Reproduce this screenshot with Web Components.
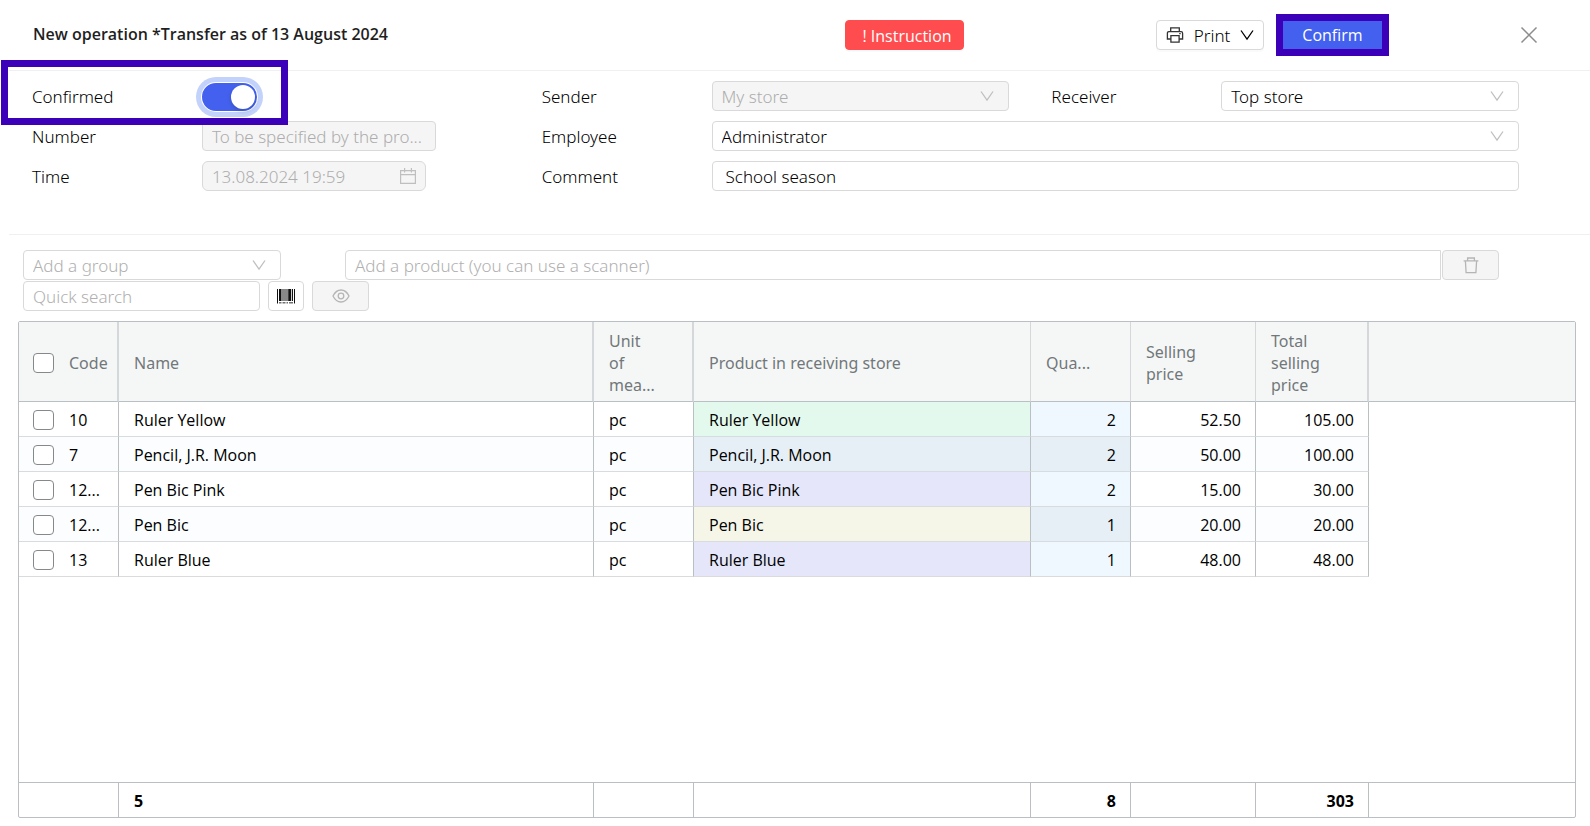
<!DOCTYPE html>
<html lang="en">
<head>
<meta charset="utf-8">
<title>New operation</title>
<style>
  html, body { margin: 0; background: #fff; }
  body { font: 300 17px/22px "Noto Sans", "Open Sans", sans-serif; color: #000; }
</style>
</head>
<body>
<op-page></op-page>
<script>
const CONTROL = `
  * { box-sizing: border-box; }
  input, select, button { font: inherit; color: inherit; margin: 0; }
  .box { position: relative; display: flex; min-width: 0; height: 30px; }
  .box input, .box select {
    flex: 1; min-width: 0; height: 30px; padding: 0 9px; background: #fff;
    border: 1px solid #d9d9d9; border-radius: 4px; appearance: none; outline: none;
    opacity: 1; text-overflow: ellipsis;
  }
  .box select { padding-top: 2px; }
  .box input::placeholder { color: #b0b0b0; opacity: 1; }
  .box :disabled { background: #f5f5f5; color: #adadad; }
  .box svg { position: absolute; right: 15px; top: 8px; pointer-events: none; color: #bfbfbf; }
`;
const ICONS = {
  down: '<svg width="14" height="14" viewBox="0 0 14 14" fill="none" stroke="currentColor" stroke-width="1.3"><path d="M1 2.500 7 11 13 2.500"/></svg>',
  calendar: '<svg width="16" height="16" viewBox="0 0 16 16" fill="none" stroke="currentColor" stroke-width="1.2"><path d="M.6 2.6h14.8v12.8H.6zM.6 6.6h14.8M4.6 0v4.4M11.4 0v4.4"/></svg>',
  print: '<svg width="18" height="18" viewBox="0 0 18 18" fill="none" stroke="#333" stroke-width="1.3"><path d="M4.7 5.6V1.8h8.6v3.8M4.7 13H1.4V7.2q0-1.5 1.5-1.5h12.2q1.5 0 1.5 1.5V13h-3.3M4.900 9.600h8.200v6.600H4.900zM13.200 7.700h1.500"/></svg>',
  close: '<svg width="18" height="18" viewBox="0 0 18 18" fill="none" stroke="currentColor" stroke-width="1.5"><path d="m1.5 1.5 15 15m0-15-15 15"/></svg>',
  trash: '<svg width="16" height="17" viewBox="0 0 16 17" fill="none" stroke="currentColor" stroke-width="1.3"><path d="M.6 3.9h14.8M2.4 4l.7 11.700h9.800L13.600 4M4.600 3.800V1h6.800v2.800"/></svg>',
  eye: '<svg width="18" height="14" viewBox="0 0 18 14" fill="none" stroke="currentColor" stroke-width="1.3"><path d="M1 7q3-6 8-6t8 6q-3 6-8 6T1 7z"/><circle cx="9" cy="7" r="2.8"/></svg>',
  barcode: '<svg width="18" height="15" viewBox="0 0 18 15" fill="currentColor"><path d="M0 0h1v14.500H0zM2 0h2.500v12H2zM5.500 0h1v12h-1zM7.500 0h1v12h-1zM9.500 0h1v12h-1zM11.200 0h3v12h-3zM15 0h1v12h-1zM17 0h1v14.500h-1z"/><path opacity=".6" d="M2 13h2.500v1.500H2zM5.500 13h3v1.500h-3zM9.500 13h1.500v1.500H9.500zM12 13h4v1.500h-4z"/></svg>'
};

class Base extends HTMLElement {
  connectedCallback() {
    if (this.shadowRoot) return;
    this.attachShadow({ mode: "open" }).innerHTML = this.view();
  }
}

customElements.define("op-page", class extends Base {
  view() { return `
    <style>
      :host { display: flex; flex-direction: column; min-height: 100vh; box-sizing: border-box; padding-bottom: 8px; }
      hr { border: 0; border-top: 1px solid #f0f0f0; margin: 0 0 0 9px; }
      op-grid { flex: 1; margin: 10px 14px 0 18px; }
    </style>
    <op-header>New operation *Transfer as of 13 August 2024</op-header>
    <hr>
    <op-form></op-form>
    <hr>
    <op-toolbar></op-toolbar>
    <op-grid></op-grid>`; }
});

customElements.define("op-header", class extends Base {
  view() { return `
    <style>
      * { box-sizing: border-box; }
      :host { display: flex; align-items: center; height: 70px; box-sizing: border-box; padding: 0 52px 0 33px; }
      h1 { flex: 1; margin: 0; padding-bottom: 2px; font: 600 16px/22px "Open Sans", "Noto Sans", sans-serif; color: #1f1f1f; }
      button { display: flex; align-items: center; justify-content: center; height: 30px; font: inherit; color: #000;
        background: #fff; border: 1px solid #d9d9d9; border-radius: 4px; margin: 0; padding: 0; box-shadow: 0 2px 0 #00000005; white-space: pre; }
      .help { width: 119px; background: #ff4d4f; border-color: #ff4d4f; color: #fff; margin-right: 192px; padding: 2px 0 0 5px; font-weight: 400; font-family: "Open Sans", sans-serif; font-size: 16px; }
      .print { width: 108px; gap: 10px; margin-right: 12px; }
      .print span { padding-top: 2px; }
      .confirm { width: 113px; height: 42px; border: 7px solid #3c00b8; border-radius: 0; background: #4361ee; color: #fff; margin-right: 131px; box-shadow: none; font-weight: 400; font-family: "Open Sans", sans-serif; font-size: 16px; }
      .close { width: 18px; border: 0; color: #8c8c8c; box-shadow: none; }
    </style>
    <h1><slot></slot></h1>
    <button class="help">! Instruction</button>
    <button class="print">${ICONS.print}<span>Print</span>${ICONS.down}</button>
    <button class="confirm">Confirm</button>
    <button class="close" aria-label="Close">${ICONS.close}</button>`; }
});

customElements.define("op-field", class extends Base {
  view() {
    const kind = this.getAttribute("kind"), value = this.getAttribute("value") || "";
    const off = this.hasAttribute("disabled") ? "disabled" : "";
    const control = {
      switch: `<input id="c" type="checkbox" role="switch" class="switch" checked>`,
      select: `<div class="box"><select id="c" ${off}><option>${value}</option></select>${ICONS.down}</div>`,
      text: `<div class="box"><input id="c" value="${value}" ${off}></div>`,
      time: `<div class="box time"><input id="c" value="${value}" ${off}>${ICONS.calendar}</div>`
    }[kind];
    return `
    <style>
      ${CONTROL}
      :host { display: grid; grid-template-columns: subgrid; align-items: center; position: relative; }
      label { padding-top: 2px; }
      .box { grid-column: 2 / -1; margin-right: 42px; }
      :host([narrow]) .box { width: 234px; }
      :host([narrow]) .time { width: 224px; }
      .time input { border-radius: 6px; }
      .time svg { top: 7px; right: 10px; }
      :host([indent]) input { padding-left: 13px; }
      .switch { appearance: none; margin: 2px 0 0; width: 55px; height: 28px; border-radius: 14px; background: #4361ee;
        border: 2px solid #4361ee; box-shadow: 0 0 0 1px #fff, 0 0 0 6px #c3d2fb; display: flex; justify-content: flex-end; }
      .switch::before { content: ""; width: 24px; height: 24px; border-radius: 50%; background: #fff; box-shadow: 0 2px 4px #00230b33; }
      :host([marked])::after { content: ""; position: absolute; left: -31px; top: -21px; bottom: -14px; width: 287px;
        box-sizing: border-box; border: 7px solid #3c00b8; pointer-events: none; z-index: 1; }
    </style>
    <label for="c">${this.getAttribute("label")}</label>${control}`;
  }
});

customElements.define("op-form", class extends Base {
  view() { return `
    <style>
      :host { display: grid; grid-template-columns: repeat(9, 1fr); grid-auto-rows: 30px; row-gap: 10px;
        padding: 10px 29px 43px 32px; }
      .s { grid-column: span 3; }
      .l { grid-column: span 6; }
    </style>
    <op-field class="s" label="Confirmed" kind="switch" marked></op-field>
    <op-field class="s" label="Sender" kind="select" value="My store" disabled></op-field>
    <op-field class="s" label="Receiver" kind="select" value="Top store"></op-field>
    <op-field class="s" label="Number" kind="text" value="To be specified by the pro..." disabled narrow></op-field>
    <op-field class="l" label="Employee" kind="select" value="Administrator"></op-field>
    <op-field class="s" label="Time" kind="time" value="13.08.2024 19:59" disabled narrow></op-field>
    <op-field class="l" label="Comment" kind="text" value="School season" indent></op-field>`; }
});

customElements.define("op-toolbar", class extends Base {
  view() { return `
    <style>
      ${CONTROL}
      :host { display: flex; flex-direction: column; gap: 1px; padding: 15px 91px 0 23px; }
      .row { display: flex; gap: 8px; }
      .group { width: 258px; margin-right: 56px; }
      .group select { color: #b0b0b0; }
      .product { flex: 1; margin-right: -7px; }
      .product input { border-radius: 4px 0 0 4px; }
      .search { width: 237px; }
      button { display: flex; align-items: center; justify-content: center; width: 57px; height: 30px; padding: 0;
        border: 1px solid #d9d9d9; border-radius: 4px; background: #f5f5f5; color: #b5b5b5; }
      .bar { width: 36px; background: #fff; color: #111; }
    </style>
    <div class="row">
      <div class="box group"><select aria-label="Add a group"><option>Add a group</option></select>${ICONS.down}</div>
      <div class="box product"><input aria-label="Product" placeholder="Add a product (you can use a scanner)"></div>
      <button disabled aria-label="Delete">${ICONS.trash}</button>
    </div>
    <div class="row">
      <div class="box search"><input aria-label="Search" placeholder="Quick search"></div>
      <button class="bar" aria-label="Barcode">${ICONS.barcode}</button>
      <button disabled aria-label="Show">${ICONS.eye}</button>
    </div>`; }
});

customElements.define("op-grid", class extends Base {
  view() {
    const rows = [
      ["10", "Ruler Yellow", "#e4f9ed", "2", "52.50", "105.00"],
      ["7", "Pencil, J.R. Moon", "#e6eff6", "2", "50.00", "100.00"],
      ["12...", "Pen Bic Pink", "#e5e6fa", "2", "15.00", "30.00"],
      ["12...", "Pen Bic", "#f5f6e8", "1", "20.00", "20.00"],
      ["13", "Ruler Blue", "#e5e6fa", "1", "48.00", "48.00"]
    ];
    return `
    <style>
      * { box-sizing: border-box; }
      :host { display: flex; border: 1px solid #babfc4; border-radius: 2px; color: #000;
        font: 400 16px/22px "Open Sans", "Noto Sans", sans-serif; }
      table { width: 100%; table-layout: fixed; border-collapse: separate; border-spacing: 0; }
      th, td { padding: 2px 14px 0 15px; text-align: left; vertical-align: middle; border-right: 1px solid #babfc4; }
      th { height: 80px; font: 400 16px/22px "Noto Sans", sans-serif; color: #72777a; background: #f5f7f7;
        border-right-color: #d5d8da; border-bottom: 1px solid #babfc4; }
      th.wide { border-right-width: 2px; }
      th:last-child, tr td:last-child { border-right: 0; }
      td { height: 35px; border-bottom: 1px solid #d9dcde; }
      tbody tr:nth-child(even) td { background: #fbfdff; }
      tbody td.q { background: #f0f8ff; }
      tbody tr:nth-child(even) td.q { background: #e6eff6; }
      tbody tr td.p { background: var(--tint) !important; }
      tbody tr td:last-child { border: 0; background: none !important; }
      .fill td { height: auto; }
      .n { text-align: right; }
      .pick { display: flex; align-items: center; gap: 15px; }
      th:first-child, td:first-child { padding: 2px 0 0 14px; }
      input { appearance: none; flex: none; width: 21px; height: 20px; margin: 0; border: 1px solid #85898c; border-radius: 4px; background: #fff; }
      tfoot td { font-weight: 700; height: 35px; border-top: 1px solid #babfc4; border-bottom: 0; }
    </style>
    <table>
      <colgroup><col style="width:100px"><col style="width:475px"><col style="width:100px"><col style="width:337px"><col style="width:100px"><col style="width:125px"><col style="width:113px"><col></colgroup>
      <thead><tr>
        <th class="wide"><label class="pick"><input type="checkbox">Code</label></th><th class="wide">Name</th>
        <th class="wide">Unit<br>of<br>mea...</th><th>Product in receiving store</th><th>Qua...</th>
        <th>Selling<br>price</th><th class="wide">Total<br>selling<br>price</th><th></th>
      </tr></thead>
      <tbody>
        ${rows.map(([code, name, tint, q, price, total]) => `<tr>
          <td><label class="pick"><input type="checkbox">${code}</label></td><td>${name}</td><td>pc</td>
          <td class="p" style="--tint:${tint}">${name}</td><td class="n q">${q}</td><td class="n">${price}</td><td class="n">${total}</td><td></td>
        </tr>`).join("")}
        <tr class="fill"><td colspan="8"></td></tr>
      </tbody>
      <tfoot><tr><td></td><td>5</td><td></td><td></td><td class="n">8</td><td></td><td class="n">303</td><td></td></tr></tfoot>
    </table>`;
  }
});
</script>
</body>
</html>
